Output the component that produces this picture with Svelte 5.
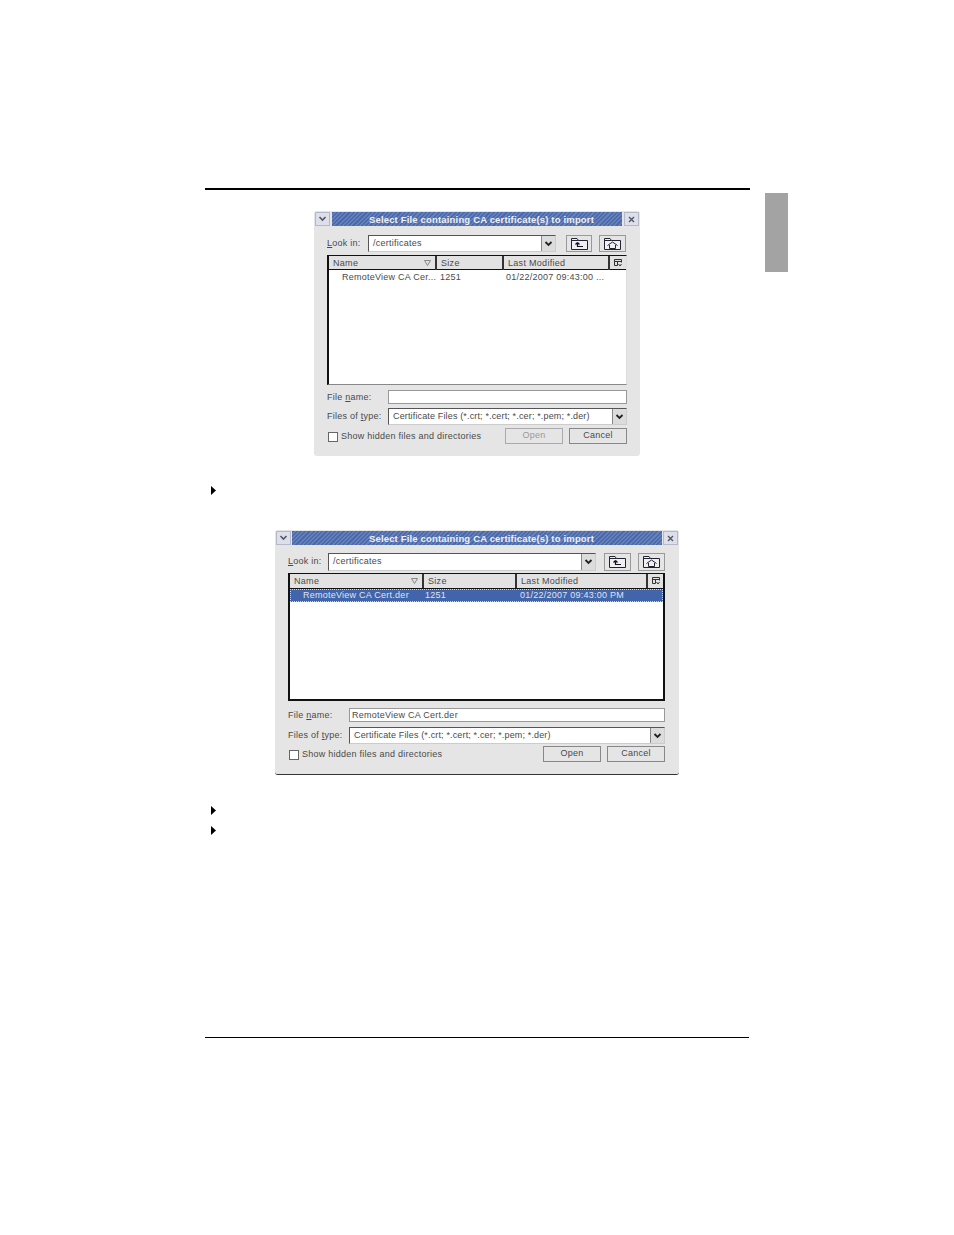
<script>
  const dialogs = {
    first: {
      cls: 'd1', row: 'RemoteView CA Cer...', size: '1251', date: '01/22/2007 09:43:00  ...',
      fileName: '', openDisabled: true, selected: false
    },
    second: {
      cls: 'd2', row: 'RemoteView CA Cert.der', size: '1251', date: '01/22/2007 09:43:00 PM',
      fileName: 'RemoteView CA Cert.der', openDisabled: false, selected: true
    }
  };
</script>

{#snippet arrow()}
  <span class="arrow">
    <svg width="9" height="6" viewBox="0 0 9 6"><path d="M1.5 1 L4.5 4 L7.5 1" fill="none" stroke="#222" stroke-width="1.8"/></svg>
  </span>
{/snippet}

{#snippet triangle()}
  <svg class="bullet" width="5" height="9" viewBox="0 0 5 9"><path d="M0 0 L5 4.5 L0 9 Z" fill="#000"/></svg>
{/snippet}

{#snippet dialog(d)}
  <section class="dialog {d.cls}">
    <div class="titlebar">
      <span class="wbtn">
        <svg width="9" height="6" viewBox="0 0 9 6"><path d="M1.5 1 L4.5 4 L7.5 1" fill="none" stroke="#556" stroke-width="1.6"/></svg>
      </span>
      <div class="title">Select File containing CA certificate(s) to import</div>
      <span class="wbtn close">
        <svg width="7" height="7" viewBox="0 0 7 7"><path d="M1 1 L6 6 M6 1 L1 6" stroke="#556" stroke-width="1.4"/></svg>
      </span>
    </div>

    <div class="body">
      <div class="look">
        <span class="label lookl"><u>L</u>ook in:</span>
        <div class="combo lookc"><span class="val">/certificates</span>{@render arrow()}</div>
        <button class="tool" aria-label="Up one level">
          <svg width="17" height="12" viewBox="0 0 17 12"><path d="M0.5 11.5 V0.5 H6 L7.5 2.5 H16.5 V11.5 Z M0.5 2.5 H7.5" fill="#f0f0f0" stroke="#223"/><path d="M6.5 4.5 V8.5 H12 M6.5 4.5 L4.5 6.5 M6.5 4.5 L8.5 6.5" fill="none" stroke="#112" stroke-width="1.2"/></svg>
        </button>
        <button class="tool" aria-label="Home">
          <svg width="17" height="12" viewBox="0 0 17 12"><path d="M0.5 11.5 V0.5 H6 L7.5 2.5 H16.5 V11.5 Z M0.5 2.5 H7.5" fill="#f0f0f0" stroke="#223"/><path d="M3.5 7.5 L8.5 4 L13.5 7.5 M5.5 7 V10.5 H11.5 V7" fill="none" stroke="#223"/></svg>
        </button>
      </div>

      <div class="list">
        <div class="head">
          <span class="col c-name">Name
            <svg class="sort" width="7" height="6" viewBox="0 0 7 6"><path d="M0.5 0.5 H6.5 L3.5 5.5 Z" fill="none" stroke="#888"/></svg>
          </span>
          <span class="col c-size">Size</span>
          <span class="col c-date">Last Modified</span>
          <span class="col c-corner">
            <svg width="8" height="8" viewBox="0 0 8 8"><path d="M0.5 6.5 V0.5 H7.5 V3.5 M0.5 2.5 H7.5 M3.5 2.5 V6.5 H0.5 M4.5 5 L6 7 L7.5 5" fill="none" stroke="#333"/></svg>
          </span>
        </div>
        <div class="row" class:selected={d.selected}>
          <span class="r-name">{d.row}</span>
          <span class="r-size">{d.size}</span>
          <span class="r-date">{d.date}</span>
        </div>
      </div>

      <div class="field filerow">
        <span class="label">File <u>n</u>ame:</span>
        <div class="input">{d.fileName}</div>
      </div>

      <div class="field typerow">
        <span class="label">Files of <u>t</u>ype:</span>
        <div class="combo"><span class="val typeval">Certificate Files (*.crt; *.cert; *.cer; *.pem; *.der)</span>{@render arrow()}</div>
      </div>

      <div class="actions">
        <span class="check"></span>
        <span class="label hidden">Show hidden files and directories</span>
        <button class="btn" class:disabled={d.openDisabled}>Open</button>
        <button class="btn">Cancel</button>
      </div>
    </div>
  </section>
{/snippet}

<main class="page">
  <div class="tab"></div>
  <hr class="rule top" />
  {@render dialog(dialogs.first)}
  <div class="b1">{@render triangle()}</div>
  {@render dialog(dialogs.second)}
  <div class="b2">{@render triangle()}</div>
  <div class="b3">{@render triangle()}</div>
  <hr class="rule bottom" />
</main>

<style>
  :global(body) { margin: 0; background: #fff; }
  .page {
    position: relative;
    width: 954px;
    height: 1235px;
    overflow: hidden;
    padding-top: 188px;
    box-sizing: border-box;
    font-family: "Liberation Sans", Arial, sans-serif;
    font-size: 9px;
    letter-spacing: 0.25px;
    color: #4a4a4a;
  }
  .tab {
    position: absolute;
    left: 765px;
    top: 193px;
    width: 23px;
    height: 79px;
    background: #a3a3a3;
  }
  .rule { border: 0; margin: 0; background: #000; }
  .rule.top { height: 2px; margin-left: 205px; width: 545px; }
  .rule.bottom { height: 1px; margin-left: 205px; width: 544px; margin-top: 202px; }
  .bullet { display: block; }
  .b1 { margin: 30px 0 0 211px; height: 9px; }
  .b2 { margin: 31px 0 0 211px; height: 9px; }
  .b3 { margin: 11px 0 0 211px; height: 9px; }

  .dialog {
    box-sizing: border-box;
    height: 245px;
    background: #e5e5e5;
    border-radius: 3px;
    display: flex;
    flex-direction: column;
    padding-top: 1px;
  }
  .d1 { width: 326px; margin: 21px 0 0 314px; }
  .d2 { width: 404px; margin: 35px 0 0 275px; border-bottom: 1px solid #333; }

  .titlebar { display: flex; height: 14px; padding: 0 1px; gap: 1px; }
  .wbtn {
    width: 15px;
    flex: none;
    display: flex;
    align-items: center;
    justify-content: center;
    background: #dde0ea;
    border: 1px solid #b4b8c8;
    box-sizing: border-box;
  }
  .title {
    flex: 1;
    padding-left: 9px;
    text-align: center;
    color: #eef0f6;
    font-weight: bold;
    font-size: 9.5px;
    line-height: 15px;
    letter-spacing: 0.17px;
    background: repeating-linear-gradient(135deg, #4a6aac 0 1.5px, #6681ba 1.5px 3px);
    white-space: nowrap;
    overflow: hidden;
  }
  .d1 .title { margin: 0 1px; }

  .body { padding: 0 13px; display: flex; flex-direction: column; }
  .d2 .body { padding-right: 14px; }

  .label { white-space: nowrap; color: #4a4a4a; }
  .look { display: flex; align-items: stretch; margin-top: 9px; height: 17px; }
  .d1 .look { padding-right: 1px; }
  .d2 .look { margin-top: 8px; height: 18px; }
  .lookl { width: 41px; flex: none; line-height: 17px; }
  .d2 .lookl { width: 40px; }

  .combo {
    flex: 1;
    min-width: 0;
    display: flex;
    align-items: stretch;
    justify-content: space-between;
    background: #fff;
    border: 1px solid #555;
    border-right-color: #ccc;
    border-bottom-color: #ccc;
    box-sizing: border-box;
  }
  .val { padding-left: 4px; line-height: 14px; white-space: nowrap; overflow: hidden; }
  .typeval { letter-spacing: 0.15px; }
  .arrow {
    width: 13px;
    flex: none;
    background: #dcdcdc;
    border-left: 1px solid #888;
    display: flex;
    align-items: center;
    justify-content: center;
  }
  .tool {
    padding: 0;
    width: 26px;
    flex: none;
    margin-left: 7px;
    background: #e5e5e5;
    border: 1px solid #999;
    border-radius: 0;
    box-sizing: border-box;
    display: flex;
    align-items: center;
    justify-content: center;
  }
  .lookc { margin-right: 3px; }
  .d2 .lookc { margin-right: 1px; }
  .tool:last-child, .d2 .tool { width: 27px; }

  .list {
    margin-top: 3px;
    height: 130px;
    box-sizing: border-box;
    background: #fff;
    border-left: 2px solid #111;
    border-top: 1px solid #111;
    border-bottom: 1px solid #888;
    border-right: 1px solid #ddd;
  }
  .d2 .list { margin-top: 2px; height: 128px; border-bottom: 2px solid #111; border-right: 2px solid #111; }
  .head {
    display: grid;
    grid-template-columns: 108px 67px 106px 15px;
    height: 14px;
    background: #e2e2e2;
    border-bottom: 1px solid #111;
    box-sizing: border-box;
  }
  .d2 .head { grid-template-columns: 134px 93px 131px 16px; height: 15px; }
  .col {
    position: relative;
    padding-left: 4px;
    line-height: 14px;
    border-right: 2px solid #333;
    white-space: nowrap;
    letter-spacing: 0.3px;
  }
  .c-corner { border-right: 0; padding: 0; display: flex; align-items: center; justify-content: center; }
  .sort { position: absolute; right: 4px; top: 4px; }
  .row {
    display: grid;
    grid-template-columns: 108px 67px 106px;
    height: 13px;
    line-height: 13px;
    white-space: nowrap;
    box-sizing: border-box;
    color: #4a4a4a;
  }
  .d1 .row { margin-top: 1px; }
  .d2 .row { grid-template-columns: 134px 93px 145px; }
  .r-name { padding-left: 13px; overflow: hidden; }
  .r-size { margin-left: 3px; }
  .r-date { margin-left: 2px; }
  .d2 .r-size { margin-left: 1px; }
  .d2 .r-date { margin-left: 3px; }
  .row.selected { background: #4264aa; color: #dfe4f0; outline: 1px dotted #cdd5e8; outline-offset: -1px; }

  .field { display: grid; grid-template-columns: 61px 1fr; align-items: stretch; }
  .field .label { line-height: 14px; }
  .filerow { margin-top: 5px; height: 14px; }
  .d2 .filerow { margin-top: 7px; }
  .input {
    background: #fff;
    border: 1px solid #999;
    box-sizing: border-box;
    padding-left: 2px;
    line-height: 12px;
    white-space: nowrap;
  }
  .typerow { margin-top: 4px; height: 17px; }
  .d2 .typerow { margin-top: 5px; }
  .typerow .label { line-height: 16px; }
  .actions { margin-top: 3px; height: 16px; display: flex; align-items: center; }
  .d2 .actions { margin-top: 2px; }
  .check {
    width: 10px;
    height: 10px;
    margin-left: 1px;
    margin-top: 2px;
    flex: none;
    background: #fff;
    border: 1px solid #666;
    box-sizing: border-box;
  }
  .hidden { margin-left: 3px; flex: 1; margin-top: -1px; }
  .btn {
    width: 58px;
    height: 16px;
    flex: none;
    padding: 0 0 2px;
    margin-left: 6px;
    font: inherit;
    letter-spacing: 0.25px;
    color: #4a4a4a;
    background: #e5e5e5;
    border: 1px solid #888;
    border-radius: 0;
    box-sizing: border-box;
  }
  .btn.disabled { color: #999; border-color: #aaa; }
</style>
